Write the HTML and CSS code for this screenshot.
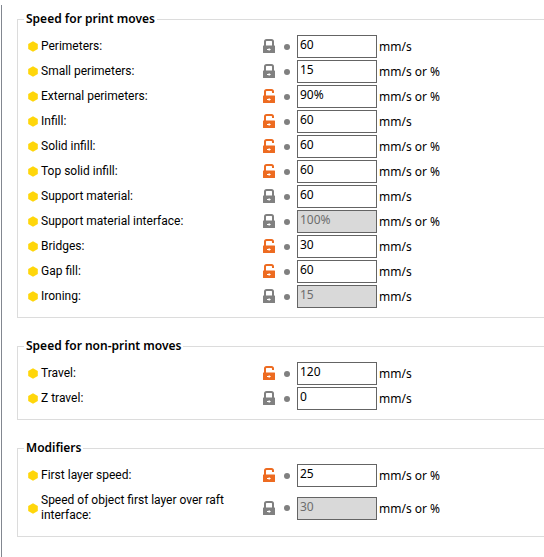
FILE: index.html
```html
<!DOCTYPE html>
<html lang="en">
<head>
    <meta charset="UTF-8">
    <meta name="viewport" content="width=device-width, initial-scale=1.0">
    <title>Speed</title>
    <link rel="stylesheet" href="styles.css">
</head>
<body>
    <svg class="symbols" width="0" height="0">
        <symbol id="hex" viewBox="0 0 10 11">
            <path d="M5 .2 9.8 2.9v5.2L5 10.8.2 8.1V2.9z" fill="#ffd60a"/>
        </symbol>
        <symbol id="locked" viewBox="0 0 12 14">
            <path d="M2 7V2.6Q2 1 3.6 1h4.8Q10 1 10 2.6V7" fill="none" stroke="currentColor" stroke-width="2"/>
            <path d="M.5 6.5h11q.5 0 .5.5v6.5q0 .5-.5.5H.5q-.5 0-.5-.5V7q0-.5.5-.5z" fill="currentColor"/>
            <path d="M4 10h1.7V9L8 10.5 5.7 12v-1H4z" fill="#fff"/>
        </symbol>
        <symbol id="unlocked" viewBox="0 0 12 14">
            <path d="M2 7V2.6Q2 1 3.6 1h4.8Q10 1 10 2.6V4" fill="none" stroke="currentColor" stroke-width="2"/>
            <path d="M.5 6.5h11q.5 0 .5.5v6.5q0 .5-.5.5H.5q-.5 0-.5-.5V7q0-.5.5-.5z" fill="currentColor"/>
            <path d="M4 10h1.7V9L8 10.5 5.7 12v-1H4z" fill="#fff"/>
        </symbol>
    </svg>
    <form class="panel">
        <fieldset>
            <legend>Speed for print moves</legend>
            <div class="row">
                <svg class="hex"><use href="#hex"/></svg>
                <label for="perimeters">Perimeters:</label>
                <button type="button" class="lock" aria-label="Locked"><svg><use href="#locked"/></svg></button>
                <span class="dot"></span>
                <input type="text" id="perimeters" value="60">
                <span class="unit">mm/s</span>
            </div>
            <div class="row">
                <svg class="hex"><use href="#hex"/></svg>
                <label for="small">Small perimeters:</label>
                <button type="button" class="lock" aria-label="Locked"><svg><use href="#locked"/></svg></button>
                <span class="dot"></span>
                <input type="text" id="small" value="15">
                <span class="unit">mm/s or %</span>
            </div>
            <div class="row">
                <svg class="hex"><use href="#hex"/></svg>
                <label for="external">External perimeters:</label>
                <button type="button" class="lock open" aria-label="Unlocked"><svg><use href="#unlocked"/></svg></button>
                <span class="dot"></span>
                <input type="text" id="external" value="90%">
                <span class="unit">mm/s or %</span>
            </div>
            <div class="row">
                <svg class="hex"><use href="#hex"/></svg>
                <label for="infill">Infill:</label>
                <button type="button" class="lock open" aria-label="Unlocked"><svg><use href="#unlocked"/></svg></button>
                <span class="dot"></span>
                <input type="text" id="infill" value="60">
                <span class="unit">mm/s</span>
            </div>
            <div class="row">
                <svg class="hex"><use href="#hex"/></svg>
                <label for="solid">Solid infill:</label>
                <button type="button" class="lock open" aria-label="Unlocked"><svg><use href="#unlocked"/></svg></button>
                <span class="dot"></span>
                <input type="text" id="solid" value="60">
                <span class="unit">mm/s or %</span>
            </div>
            <div class="row">
                <svg class="hex"><use href="#hex"/></svg>
                <label for="topSolid">Top solid infill:</label>
                <button type="button" class="lock open" aria-label="Unlocked"><svg><use href="#unlocked"/></svg></button>
                <span class="dot"></span>
                <input type="text" id="topSolid" value="60">
                <span class="unit">mm/s or %</span>
            </div>
            <div class="row">
                <svg class="hex"><use href="#hex"/></svg>
                <label for="support">Support material:</label>
                <button type="button" class="lock" aria-label="Locked"><svg><use href="#locked"/></svg></button>
                <span class="dot"></span>
                <input type="text" id="support" value="60">
                <span class="unit">mm/s</span>
            </div>
            <div class="row">
                <svg class="hex"><use href="#hex"/></svg>
                <label for="supportInterface">Support material interface:</label>
                <button type="button" class="lock" aria-label="Locked"><svg><use href="#locked"/></svg></button>
                <span class="dot"></span>
                <input type="text" id="supportInterface" value="100%" disabled>
                <span class="unit">mm/s or %</span>
            </div>
            <div class="row">
                <svg class="hex"><use href="#hex"/></svg>
                <label for="bridges">Bridges:</label>
                <button type="button" class="lock open" aria-label="Unlocked"><svg><use href="#unlocked"/></svg></button>
                <span class="dot"></span>
                <input type="text" id="bridges" value="30">
                <span class="unit">mm/s</span>
            </div>
            <div class="row">
                <svg class="hex"><use href="#hex"/></svg>
                <label for="gapFill">Gap fill:</label>
                <button type="button" class="lock open" aria-label="Unlocked"><svg><use href="#unlocked"/></svg></button>
                <span class="dot"></span>
                <input type="text" id="gapFill" value="60">
                <span class="unit">mm/s</span>
            </div>
            <div class="row">
                <svg class="hex"><use href="#hex"/></svg>
                <label for="ironing">Ironing:</label>
                <button type="button" class="lock" aria-label="Locked"><svg><use href="#locked"/></svg></button>
                <span class="dot"></span>
                <input type="text" id="ironing" value="15" disabled>
                <span class="unit">mm/s</span>
            </div>
        </fieldset>

        <fieldset>
            <legend>Speed for non-print moves</legend>
            <div class="row">
                <svg class="hex"><use href="#hex"/></svg>
                <label for="travel">Travel:</label>
                <button type="button" class="lock open" aria-label="Unlocked"><svg><use href="#unlocked"/></svg></button>
                <span class="dot"></span>
                <input type="text" id="travel" value="120">
                <span class="unit">mm/s</span>
            </div>
            <div class="row">
                <svg class="hex"><use href="#hex"/></svg>
                <label for="zTravel">Z travel:</label>
                <button type="button" class="lock" aria-label="Locked"><svg><use href="#locked"/></svg></button>
                <span class="dot"></span>
                <input type="text" id="zTravel" value="0">
                <span class="unit">mm/s</span>
            </div>
        </fieldset>

        <fieldset>
            <legend>Modifiers</legend>
            <div class="row">
                <svg class="hex"><use href="#hex"/></svg>
                <label for="firstLayer">First layer speed:</label>
                <button type="button" class="lock open" aria-label="Unlocked"><svg><use href="#unlocked"/></svg></button>
                <span class="dot"></span>
                <input type="text" id="firstLayer" value="25">
                <span class="unit">mm/s or %</span>
            </div>
            <div class="row">
                <svg class="hex"><use href="#hex"/></svg>
                <label for="raft">Speed of object first layer over raft interface:</label>
                <button type="button" class="lock" aria-label="Locked"><svg><use href="#locked"/></svg></button>
                <span class="dot"></span>
                <input type="text" id="raft" value="30" disabled>
                <span class="unit">mm/s or %</span>
            </div>
        </fieldset>
    </form>
</body>
</html>
```
FILE: styles.css
```css
* { box-sizing: border-box; }
body { margin: 0; padding: 5px 0 0 1px; background: #fff; color: #000; font: 12px/15px "Noto Sans", "Open Sans", sans-serif; }
.symbols { position: absolute; }
.panel { min-height: calc(100vh - 5px); padding: 4px 0 0 15px; border-left: 1px solid #828790; }

fieldset { min-width: 0; margin: 0 0 18px; padding: 5px 0 8px 6px; border: 1px solid #dcdcdc; border-right: 0; }
legend { padding: 0 2px; font-weight: 600; line-height: 20px; }

.row { display: grid; grid-template-columns: 10px 225px 12px 22px 80px 1fr; align-items: center; min-height: 25px; padding-left: 4px; }
.hex { width: 10px; height: 11px; }
label { padding: 5px 20px 5px 3px; font-family: Roboto, "Noto Sans", sans-serif; }
.lock { width: 12px; height: 15px; padding: 0 0 1px; border: 0; background: none; color: #808080; cursor: pointer; }
.lock.open { color: #ed6b21; }
.lock svg { display: block; width: 12px; height: 14px; }
.dot { width: 6px; height: 6px; margin-left: 9px; border-radius: 50%; background: #808080; }
input { width: 80px; height: 23px; padding: 0 2px 4px; border: 1px solid #646464; background: #fff; color: #000; font: inherit; }
input:disabled { background: #d9d9d9; color: #6d6d6d; }
.unit { padding-left: 2px; }
```
